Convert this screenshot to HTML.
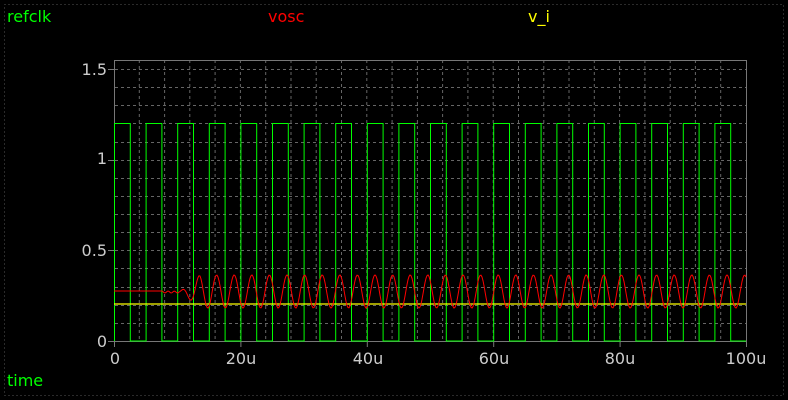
<!DOCTYPE html>
<html><head><meta charset="utf-8"><style>
html,body{margin:0;padding:0;background:#000;width:788px;height:400px;overflow:hidden}
svg{display:block}
text{font-family:"DejaVu Sans","Liberation Sans",sans-serif;font-size:16px}
</style></head><body>
<svg id="s" width="788" height="400" xmlns="http://www.w3.org/2000/svg">
<rect x="0" y="0" width="788" height="400" fill="#000"/>
<rect x="4.5" y="4.5" width="779" height="391" fill="none" stroke="#555" stroke-dasharray="1,3"/>
<g id="grid" stroke="#666" stroke-width="1" stroke-dasharray="3,3"></g>
<rect x="114.5" y="60.5" width="632" height="281" fill="none" stroke="#777"/>
<g id="ticks" stroke="#777"></g>
<path id="sq" fill="none" stroke="#00ff00" stroke-width="1"/>
<line x1="114" y1="304" x2="746" y2="304" stroke="#ffff00" stroke-width="1.2"/>
<path id="osc" fill="none" stroke="#ff0000" stroke-width="1"/>
<g fill="#ccc" text-anchor="end">
<text x="107" y="75">1.5</text>
<text x="107" y="164">1</text>
<text x="107" y="256">0.5</text>
<text x="107" y="347">0</text>
</g>
<g fill="#ccc" text-anchor="middle">
<text x="115" y="364">0</text>
<text x="241" y="364">20u</text>
<text x="368" y="364">40u</text>
<text x="494" y="364">60u</text>
<text x="620" y="364">80u</text>
<text x="746" y="364">100u</text>
</g>
<text x="7" y="22" fill="#00ff00">refclk</text>
<text x="268" y="22" fill="#ff0000">vosc</text>
<text x="528" y="22" fill="#ffff00">v_i</text>
<text x="7" y="386" fill="#00ff00">time</text>
</svg>
<script>
var ns="http://www.w3.org/2000/svg";
function Y(v){return 341-v*181.3;}
var g=document.getElementById('grid'),t=document.getElementById('ticks');
for(var i=1;i<25;i++){var x=114+i*632/25;var l=document.createElementNS(ns,'line');l.setAttribute('x1',x.toFixed(1));l.setAttribute('x2',x.toFixed(1));l.setAttribute('y1',60);l.setAttribute('y2',341);g.appendChild(l);}
for(var j=1;j<=15;j++){var y=Math.round(Y(j/10))+0.5;var l=document.createElementNS(ns,'line');l.setAttribute('x1',115);l.setAttribute('x2',746);l.setAttribute('y1',y);l.setAttribute('y2',y);g.appendChild(l);
if(j%5==0){var m=document.createElementNS(ns,'line');m.setAttribute('x1',108);m.setAttribute('x2',114);m.setAttribute('y1',y);m.setAttribute('y2',y);t.appendChild(m);}}
var m0=document.createElementNS(ns,'line');m0.setAttribute('x1',108);m0.setAttribute('x2',114);m0.setAttribute('y1',341.5);m0.setAttribute('y2',341.5);t.appendChild(m0);
[114,240.4,366.8,493.2,619.6,746].forEach(function(x){var l=document.createElementNS(ns,'line');l.setAttribute('x1',x+.5);l.setAttribute('x2',x+.5);l.setAttribute('y1',341);l.setAttribute('y2',347);t.appendChild(l);});
var hi=Y(1.2),lo=341,d="M114.5,"+lo;
for(var k=0;k<20;k++){var a=114.5+k*31.6,b=a+15.8;d+=" L"+a.toFixed(1)+","+lo+" L"+a.toFixed(1)+","+hi+" L"+b.toFixed(1)+","+hi+" L"+b.toFixed(1)+","+lo;}
d+=" L746,"+lo;
document.getElementById('sq').setAttribute('d',d);
var o="";
for(var x=114;x<=746;x+=1){var y;
if(x<163)y=291;
else if(x<180)y=292+Math.sin(x)*1;
else{var amp=Math.min(1,(x-180)/20);var ph=(x-199)/17.6*2*Math.PI;var s=Math.cos(ph);y=291.5-amp*16.5*s;if(s<-0.6)y=Math.min(y,308);}
o+=(x==114?"M":" L")+x+","+y.toFixed(1);}
document.getElementById('osc').setAttribute('d',o);
</script>
</body></html>
